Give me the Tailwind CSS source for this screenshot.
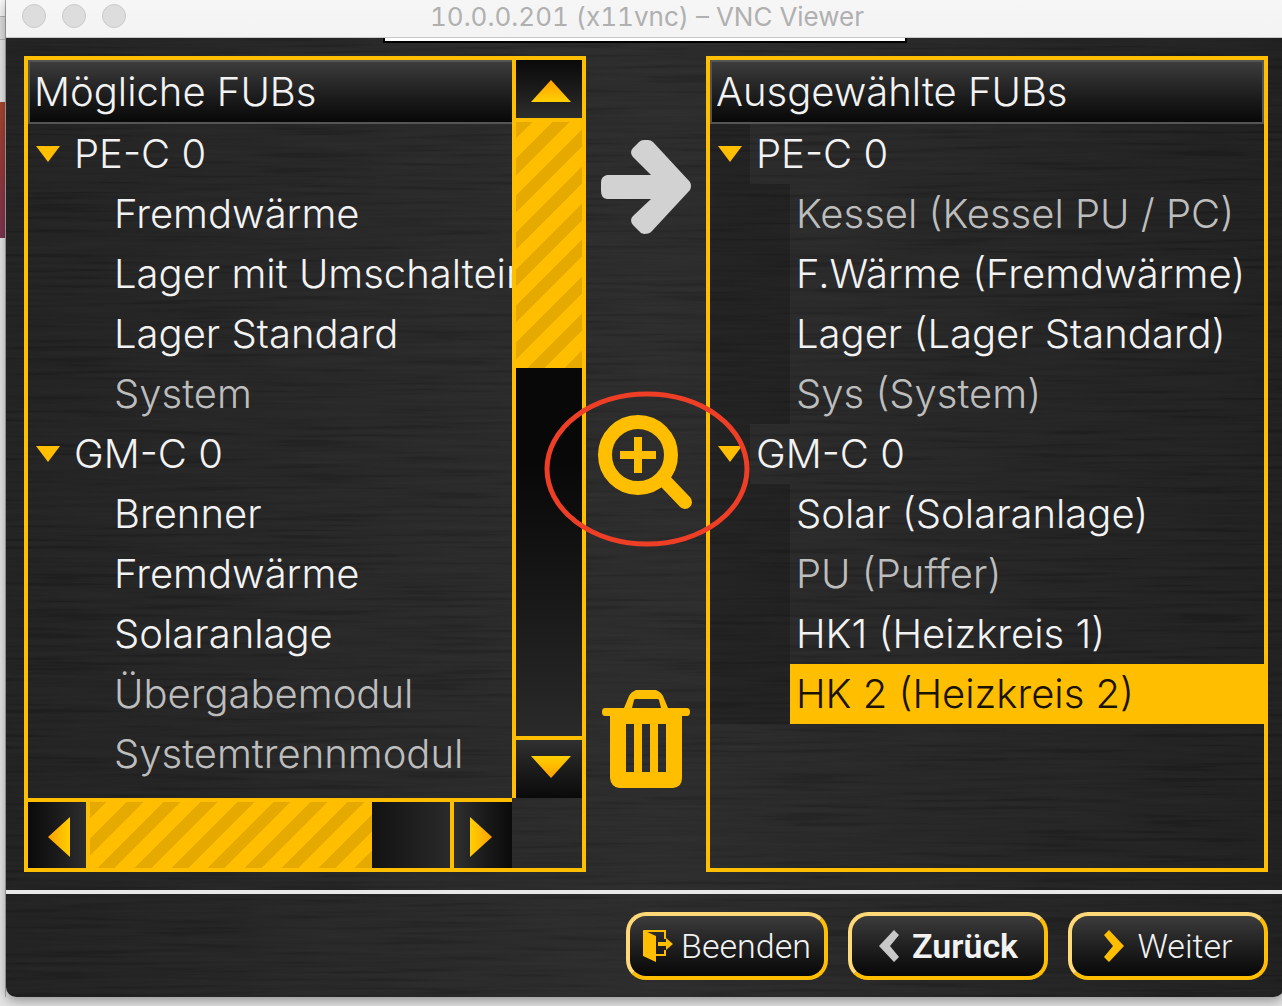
<!DOCTYPE html>
<html lang="de">

<head>
    <meta charset="utf-8">
    <meta name="viewport" content="width=device-width, initial-scale=1">
    <title>10.0.0.201 (x11vnc) – VNC Viewer</title>
    <script src="https://cdn.jsdelivr.net/npm/@tailwindcss/browser@4"></script>
</head>

<body class="bg-[#e4e4e4] font-['Inter',sans-serif]">
    <div class="flex min-h-screen overflow-hidden pb-[9px]">
        <!-- strip of the window behind -->
        <div class="w-[6px] shrink-0 border-r border-[#aaaaaa]">
            <div class="h-4 bg-[#f6f6f6]"></div>
            <div class="h-6 border-y border-[#b5b5b5] bg-[#dedede]"></div>
            <div class="h-[62px]"></div>
            <div class="h-[136px] bg-gradient-to-b from-[#a8462f] via-[#96383c] to-[#7c3450]"></div>
        </div>

        <div class="-mr-0.5 flex min-w-0 flex-1 flex-col overflow-hidden rounded-b-[10px] shadow-[0_4px_12px_rgba(0,0,0,0.35)]">
            <header class="relative flex h-[38px] shrink-0 items-center justify-center border-b border-[#c8c8c8] bg-gradient-to-b from-[#f6f6f6] to-[#f3f3f3]">
                <div class="absolute left-4 top-1 flex gap-4">
                    <button aria-label="Schließen" class="size-6 rounded-full border border-[#cbcbcb] bg-[#dddddd]"></button>
                    <button aria-label="Minimieren" class="size-6 rounded-full border border-[#cbcbcb] bg-[#dddddd]"></button>
                    <button aria-label="Maximieren" class="size-6 rounded-full border border-[#cbcbcb] bg-[#dddddd]"></button>
                </div>
                <h1 class="pb-1 pl-1 text-[26px] leading-8 tabular-nums text-[#b0b0b0]">10.0.0.201 (x11vnc) – VNC Viewer</h1>
            </header>

            <div class="relative flex flex-1 flex-col bg-gradient-to-r from-[#202020] via-[#2a2a2a] to-[#1e1e1e]">
                <!-- brushed metal -->
                <svg class="pointer-events-none absolute inset-0 size-full opacity-10" aria-hidden="true">
                    <filter id="brushed" x="0" y="0" width="100%" height="100%">
                        <feTurbulence type="fractalNoise" baseFrequency="0.008 0.25" numOctaves="2" seed="4" />
                        <feColorMatrix values="1 0 0 0 -0.3  1 0 0 0 -0.3  1 0 0 0 -0.3  0 0 0 0 0.4" />
                    </filter>
                    <rect width="100%" height="100%" filter="url(#brushed)" />
                </svg>
                <div class="absolute left-1/2 top-0 h-[5px] w-[524px] -translate-x-1/2 border-x-2 border-b-2 border-black bg-white"></div>

                <main class="relative flex flex-1 pl-[18px] pr-4 pt-[18px] pb-[18px]">
                    <section class="grid min-w-0 flex-1 grid-cols-[minmax(0,1fr)_70px] grid-rows-[1fr_70px] border-4 border-[#ffbe00]">
                        <div class="overflow-hidden">
                            <h2 class="flex h-16 items-center border-2 border-r-0 border-[#555555] bg-gradient-to-b from-[#3c3c3c] to-[#080808] pl-1 text-[40px] leading-[60px] font-light text-[#f2f2f2]">Mögliche FUBs</h2>
                            <ul class="whitespace-nowrap text-[40px] leading-[60px] font-light text-[#f2f2f2]">
                                <li>
                                    <button class="flex h-15 w-full items-center pl-2 text-left">
                                        <svg class="mr-[14px] h-4 w-6" viewBox="0 0 24 16" fill="#ffbe00"><path d="M0 0h24L12 16z" /></svg>PE-C 0
                                    </button>
                                    <ul>
                                        <li><button class="block h-15 pl-[86px]">Fremdwärme</button></li>
                                        <li><button class="block h-15 pl-[86px]">Lager mit Umschaltein</button></li>
                                        <li><button class="block h-15 pl-[86px]">Lager Standard</button></li>
                                        <li><button class="block h-15 pl-[86px] text-[#bdbdbd]">System</button></li>
                                    </ul>
                                </li>
                                <li>
                                    <button class="flex h-15 w-full items-center pl-2 text-left">
                                        <svg class="mr-[14px] h-4 w-6" viewBox="0 0 24 16" fill="#ffbe00"><path d="M0 0h24L12 16z" /></svg>GM-C 0
                                    </button>
                                    <ul>
                                        <li><button class="block h-15 pl-[86px]">Brenner</button></li>
                                        <li><button class="block h-15 pl-[86px]">Fremdwärme</button></li>
                                        <li><button class="block h-15 pl-[86px]">Solaranlage</button></li>
                                        <li><button class="block h-15 pl-[86px] text-[#bdbdbd]">Übergabemodul</button></li>
                                        <li><button class="block h-15 pl-[86px] text-[#bdbdbd]">Systemtrennmodul</button></li>
                                    </ul>
                                </li>
                            </ul>
                        </div>

                        <!-- vertical scrollbar -->
                        <div class="flex flex-col border-l-4 border-[#ffbe00]">
                            <button aria-label="Nach oben" class="flex h-[62px] items-center justify-center border-b-4 border-[#ffbe00] bg-gradient-to-b from-[#0a0a0a] to-[#2d2d2d] pt-1 pl-1">
                                <svg class="h-[22px] w-10" viewBox="0 0 40 22"><defs><linearGradient id="up" x2="0" y2="1"><stop stop-color="#ffa000" /><stop offset="1" stop-color="#ffd000" /></linearGradient></defs><path d="M20 0l20 22H0z" fill="url(#up)" /></svg>
                            </button>
                            <div class="flex flex-1 flex-col bg-gradient-to-b from-[#080808] from-55% to-[#2a2a2a]">
                                <div class="bg-[repeating-linear-gradient(135deg,#e6a900_0px,#e6a900_12px,#ffbe00_12px,#ffbe00_26px)]" style="height: 40%"></div>
                            </div>
                            <button aria-label="Nach unten" class="flex h-[62px] items-center justify-center border-t-4 border-[#ffbe00] bg-gradient-to-b from-[#303030] to-[#0a0a0a] pb-1 pl-1">
                                <svg class="h-[22px] w-10" viewBox="0 0 40 22"><defs><linearGradient id="down" x2="0" y2="1"><stop stop-color="#ffd000" /><stop offset="1" stop-color="#ffa000" /></linearGradient></defs><path d="M20 22L0 0h40z" fill="url(#down)" /></svg>
                            </button>
                        </div>

                        <!-- horizontal scrollbar -->
                        <div class="flex border-t-4 border-[#ffbe00]">
                            <button aria-label="Nach links" class="flex w-[62px] items-center justify-center border-r-4 border-[#ffbe00] bg-gradient-to-r from-[#0a0a0a] to-[#2d2d2d] pt-1 pl-1">
                                <svg class="h-10 w-[22px]" viewBox="0 0 22 40"><defs><linearGradient id="left"><stop stop-color="#ffa000" /><stop offset="1" stop-color="#ffd000" /></linearGradient></defs><path d="M0 20L22 0v40z" fill="url(#left)" /></svg>
                            </button>
                            <div class="flex flex-1 bg-gradient-to-r from-[#0a0a0a] from-70% to-[#2a2a2a]">
                                <div class="bg-[repeating-linear-gradient(135deg,#e6a900_0px,#e6a900_12px,#ffbe00_12px,#ffbe00_26px)]" style="width: 78.3%"></div>
                            </div>
                            <button aria-label="Nach rechts" class="flex w-[62px] items-center justify-center border-l-4 border-[#ffbe00] bg-gradient-to-r from-[#303030] to-[#0a0a0a] pt-1 pr-1">
                                <svg class="h-10 w-[22px]" viewBox="0 0 22 40"><defs><linearGradient id="right"><stop stop-color="#ffd000" /><stop offset="1" stop-color="#ffa000" /></linearGradient></defs><path d="M22 20L0 40V0z" fill="url(#right)" /></svg>
                            </button>
                        </div>
                    </section>

                    <div class="z-10 flex w-[120px] shrink-0 flex-col items-center justify-between py-[84px]">
                        <button aria-label="Hinzufügen">
                            <svg class="h-[94px] w-[90px]" viewBox="0 0 90 94" fill="#d2d2d2"><path d="M6 35h44L32 17q-4-5 0-9l6-6q2-2 5-2h4q3 0 5 2l37 40q2 4 0 8L51 91q-2 3-8 3-3 0-5-3l-6-6q-4-5 0-9l18-17H6q-6-1-6-8v-8q0-7 6-8z" /></svg>
                        </button>
                        <button aria-label="Details" class="relative">
                            <svg class="h-[94px] w-24" viewBox="0 0 96 94" fill="none" stroke="#ffbe00">
                                <circle cx="40" cy="40" r="33" stroke-width="14" />
                                <path d="M40 22v36M22 40h36" stroke-width="8" />
                                <path d="M66 65l21 22" stroke-width="14" stroke-linecap="round" />
                            </svg>
                            <!-- hand-drawn marker round the button -->
                            <svg class="pointer-events-none absolute -left-[55px] -top-[24px] h-[156px] w-[208px] max-w-none" viewBox="0 0 208 156" fill="none"><ellipse cx="104" cy="78" rx="100" ry="75" stroke="#ee3f26" stroke-width="5" /></svg>
                        </button>
                        <button aria-label="Löschen">
                            <svg class="h-[98px] w-[88px]" viewBox="0 0 88 98" fill="#ffbe00" fill-rule="evenodd"><path d="M22 18l5-12q2-4 7-6h20q5 2 7 6l5 12h19q3 0 3 4t-3 4h-5v62q0 9-9 10H17q-8-1-9-10V26H3q-3 0-3-4t3-4zM30 18h29l-2-8q0-1-2-1H34q-2 0-2 1zM24 34v48h8V34zM40 34v48h8V34zM56 34v48h8V34z" /></svg>
                        </button>
                    </div>

                    <section class="min-w-0 flex-1 overflow-hidden border-4 border-[#ffbe00]">
                        <h2 class="flex h-16 items-center border-2 border-[#555555] bg-gradient-to-b from-[#3c3c3c] to-[#080808] pl-1 text-[40px] leading-[60px] font-light text-[#f2f2f2]">Ausgewählte FUBs</h2>
                        <ul class="whitespace-nowrap text-[40px] leading-[60px] font-light text-[#f2f2f2]">
                            <li>
                                <button class="flex h-15 w-full items-center text-left">
                                    <svg class="h-15 w-10 bg-black/20" viewBox="0 0 40 60" fill="#ffbe00"><path d="M8 22h24L20 38z" /></svg><span class="pl-[6px]">PE-C 0</span>
                                </button>
                                <ul class="border-l-80 border-black/20">
                                    <li><button class="block h-15 w-full pl-[6px] text-left text-[#bdbdbd]">Kessel (Kessel PU / PC)</button></li>
                                    <li><button class="block h-15 w-full pl-[6px] text-left">F.Wärme (Fremdwärme)</button></li>
                                    <li><button class="block h-15 w-full pl-[6px] text-left">Lager (Lager Standard)</button></li>
                                    <li><button class="block h-15 w-full pl-[6px] text-left text-[#bdbdbd]">Sys (System)</button></li>
                                </ul>
                            </li>
                            <li>
                                <button class="flex h-15 w-full items-center text-left">
                                    <svg class="h-15 w-10 bg-black/20" viewBox="0 0 40 60" fill="#ffbe00"><path d="M8 22h24L20 38z" /></svg><span class="pl-[6px]">GM-C 0</span>
                                </button>
                                <ul class="border-l-80 border-black/20">
                                    <li><button class="block h-15 w-full pl-[6px] text-left">Solar (Solaranlage)</button></li>
                                    <li><button class="block h-15 w-full pl-[6px] text-left text-[#bdbdbd]">PU (Puffer)</button></li>
                                    <li><button class="block h-15 w-full pl-[6px] text-left">HK1 (Heizkreis 1)</button></li>
                                    <li><button class="block h-15 w-full bg-[#ffbe00] pl-[6px] text-left text-[#1a1300]">HK 2 (Heizkreis 2)</button></li>
                                </ul>
                            </li>
                        </ul>
                    </section>
                </main>

                <footer class="relative flex shrink-0 justify-end gap-5 border-t-4 border-[#e8e8e8] pl-4 pr-4 pt-[18px] pb-[17px] font-['Roboto',sans-serif] text-[34px] font-light text-[#f2f2f2]">
                    <button class="flex h-[68px] w-[202px] items-center justify-center gap-2 rounded-[20px] border-4 border-t-[#ffd878] border-r-[#ffbe00] border-b-[#ffbe00] border-l-[#ffd878] bg-gradient-to-b from-[#3c3c3c] to-[#080808]">
                        <svg class="h-8 w-[30px]" viewBox="0 0 30 32"><path d="M1 1h21v8M22 20v5H12" fill="none" stroke="#ffbe00" stroke-width="2" /><path d="M0 0l13 6v26L0 26zM15 12h8V8l7 6-7 6v-4h-8z" fill="#ffbe00" /></svg>
                        Beenden
                    </button>
                    <button class="flex h-[68px] w-[200px] items-center justify-center gap-3 rounded-[20px] border-4 border-t-[#ffd878] border-r-[#ffbe00] border-b-[#ffbe00] border-l-[#ffd878] bg-gradient-to-b from-[#3c3c3c] to-[#080808] font-semibold">
                        <svg class="h-8 w-[22px]" viewBox="0 0 22 32"><path d="M16 0l5 5-9 11 9 11-5 5L1 16z" fill="#c8c8c8" /></svg>
                        Zurück
                    </button>
                    <button class="flex h-[68px] w-[200px] items-center justify-center gap-3 rounded-[20px] border-4 border-t-[#ffd878] border-r-[#ffbe00] border-b-[#ffbe00] border-l-[#ffd878] bg-gradient-to-b from-[#3c3c3c] to-[#080808]">
                        <svg class="h-8 w-[22px]" viewBox="0 0 22 32"><path d="M6 0L1 5l9 11-9 11 5 5 15-16z" fill="#ffbe00" /></svg>
                        Weiter
                    </button>
                </footer>
            </div>
        </div>
    </div>
</body>

</html>
